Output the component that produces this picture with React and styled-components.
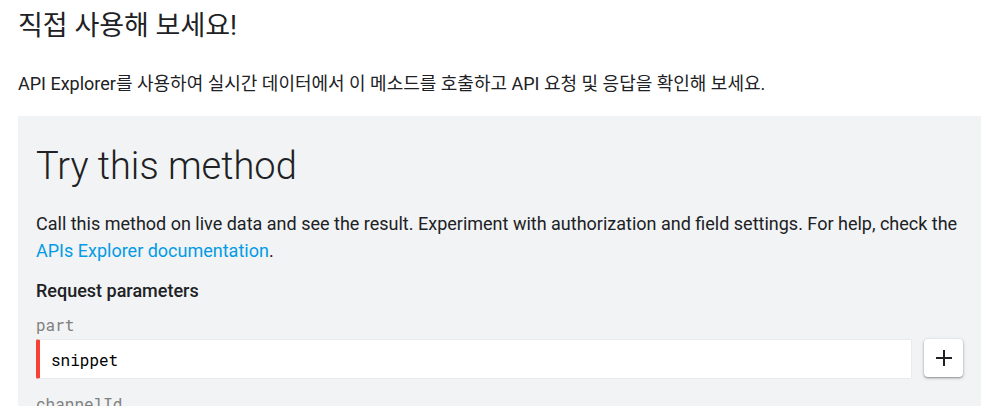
import React from "react";
import styled, { createGlobalStyle } from "styled-components";

const GlobalStyle = createGlobalStyle`
  *, *::before, *::after { box-sizing: border-box; }
  html, body { margin: 0; height: 100%; }
  body {
    overflow: hidden;
    background: #fff;
    color: #202124;
    font-family: Roboto, "Noto Sans CJK KR", sans-serif;
    font-size: 18px;
    line-height: 28px;
  }
`;

const Page = styled.main`
  padding: 10px 13px 0 18px;
`;

const SectionTitle = styled.h2`
  margin: 0 0 28px;
  font-size: 27px;
  font-weight: 400;
  line-height: 32px;
`;

const Intro = styled.p`
  margin: 0 0 18px;
`;

const Explorer = styled.section`
  padding: 26px 18px;
  background: #f1f3f4;
`;

const ExplorerTitle = styled.h1`
  margin: 0 0 20px;
  font-size: 38px;
  font-weight: 300;
  line-height: 48px;
`;

const Description = styled.p`
  margin: 0 0 13px;
  line-height: 27px;
`;

const DocLink = styled.a`
  color: #039be5;
  text-decoration: none;
`;

const GroupTitle = styled.h3`
  margin: 0 0 8px;
  font-size: 18px;
  font-weight: 500;
  line-height: 28px;
`;

const Field = styled.div`
  margin-bottom: 13px;
`;

const FieldLabel = styled.label`
  display: block;
  padding-bottom: 2px;
  color: #808080;
  font-family: "Roboto Mono", "DejaVu Sans Mono", monospace;
  font-size: 16px;
  line-height: 24px;
`;

const FieldRow = styled.div`
  display: flex;
  align-items: flex-start;
  gap: 12px;
`;

const FieldInput = styled.input`
  flex: 1;
  min-width: 0;
  height: 40px;
  padding: 4px 11px;
  border: 1px solid #e8eaed;
  border-left: ${(p) => (p.required ? "4px solid #f44336" : "1px solid #e8eaed")};
  border-radius: 2px;
  background: #fff;
  color: #000;
  font-family: "Roboto Mono", "DejaVu Sans Mono", monospace;
  font-size: 16px;
  outline: none;
`;

const AddButton = styled.button`
  display: grid;
  place-items: center;
  width: 39px;
  height: 38px;
  padding: 0;
  border: 0;
  border-radius: 4px;
  background: #fff;
  color: #202124;
  box-shadow: 0 1px 2px rgba(60, 64, 67, 0.5), 0 1px 4px rgba(60, 64, 67, 0.15);
`;

export default function App() {
  return (
    <>
      <GlobalStyle />
      <Page>
        <SectionTitle>직접 사용해 보세요!</SectionTitle>
        <Intro>
          API Explorer를 사용하여 실시간 데이터에서 이 메소드를 호출하고 API 요청 및 응답을 확인해 보세요.
        </Intro>
        <Explorer>
          <ExplorerTitle>Try this method</ExplorerTitle>
          <Description>
            Call this method on live data and see the result. Experiment with authorization and
            field settings. For help, check the{" "}
            <DocLink href="#documentation">APIs Explorer documentation</DocLink>.
          </Description>
          <GroupTitle>Request parameters</GroupTitle>
          <Field>
            <FieldLabel htmlFor="part">part</FieldLabel>
            <FieldRow>
              <FieldInput id="part" type="text" defaultValue="snippet" required />
              <AddButton type="button" aria-label="Add part">
                <svg width="16" height="16" viewBox="0 0 16 16" aria-hidden="true">
                  <path d="M8 0V16M0 8H16" stroke="currentColor" strokeWidth="2" />
                </svg>
              </AddButton>
            </FieldRow>
          </Field>
          <Field>
            <FieldLabel htmlFor="channelId">channelId</FieldLabel>
            <FieldRow>
              <FieldInput id="channelId" type="text" />
            </FieldRow>
          </Field>
        </Explorer>
      </Page>
    </>
  );
}
